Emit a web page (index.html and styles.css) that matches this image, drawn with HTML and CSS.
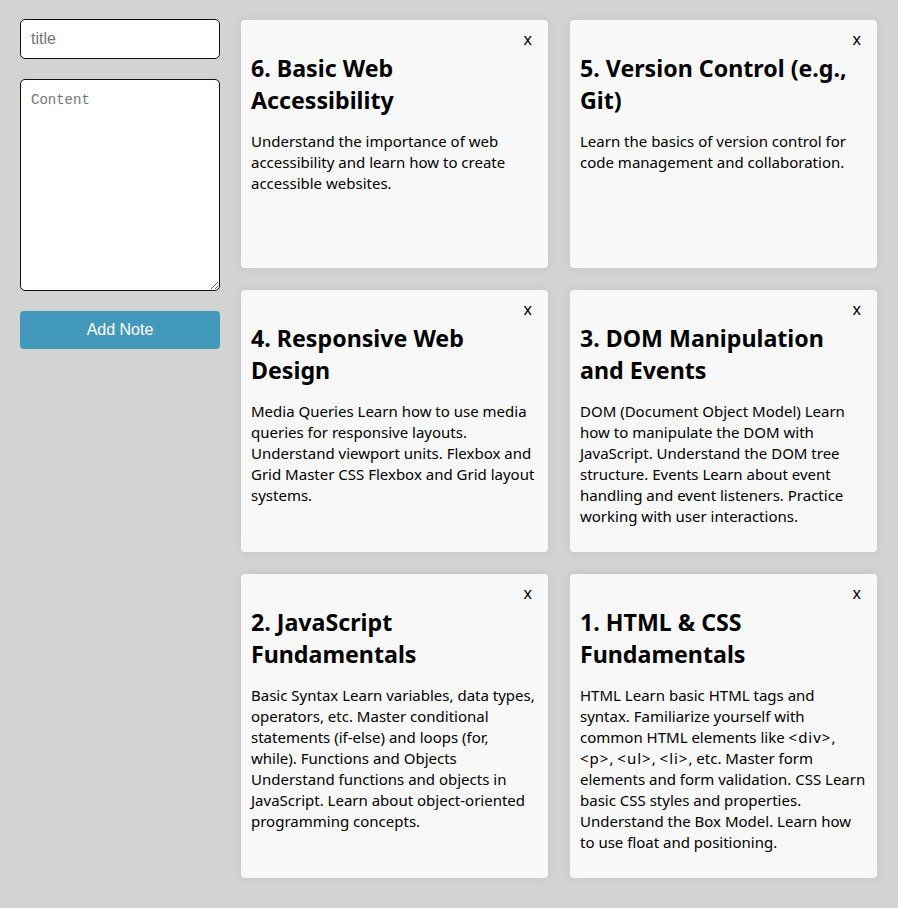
FILE: index.html
```html
<!DOCTYPE html>
<html>
<head>
<meta charset="utf-8">
<link rel="stylesheet" href="styles.css">
</head>
<body>
<div class="app">
  <form class="editor">
    <input class="title-input" type="text" placeholder="title">
    <textarea class="content-input" placeholder="Content"></textarea>
    <button class="add-btn" type="button">Add Note</button>
  </form>
  <div class="notes">
    <div class="note">
      <div class="note-head"><button class="close">x</button></div>
      <h2>6. Basic Web Accessibility</h2>
      <p>Understand the importance of web accessibility and learn how to create accessible websites.</p>
    </div>
    <div class="note">
      <div class="note-head"><button class="close">x</button></div>
      <h2>5. Version Control (e.g., Git)</h2>
      <p>Learn the basics of version control for code management and collaboration.</p>
    </div>
    <div class="note">
      <div class="note-head"><button class="close">x</button></div>
      <h2>4. Responsive Web Design</h2>
      <p>Media Queries Learn how to use media queries for responsive layouts. Understand viewport units. Flexbox and Grid Master CSS Flexbox and Grid layout systems.</p>
    </div>
    <div class="note">
      <div class="note-head"><button class="close">x</button></div>
      <h2>3. DOM Manipulation and Events</h2>
      <p>DOM (Document Object Model) Learn how to manipulate the DOM with JavaScript. Understand the DOM tree structure. Events Learn about event handling and event listeners. Practice working with user interactions.</p>
    </div>
    <div class="note">
      <div class="note-head"><button class="close">x</button></div>
      <h2>2. JavaScript Fundamentals</h2>
      <p>Basic Syntax Learn variables, data types, operators, etc. Master conditional statements (if-else) and loops (for, while). Functions and Objects Understand functions and objects in JavaScript. Learn about object-oriented programming concepts.</p>
    </div>
    <div class="note">
      <div class="note-head"><button class="close">x</button></div>
      <h2>1. HTML &amp; CSS Fundamentals</h2>
      <p>HTML Learn basic HTML tags and syntax. Familiarize yourself with common HTML elements like <span class="tag">&lt;div&gt;</span>, <span class="tag">&lt;p&gt;</span>, <span class="tag">&lt;ul&gt;</span>, <span class="tag">&lt;li&gt;</span>, etc. Master form elements and form validation. CSS Learn basic CSS styles and properties. Understand the Box Model. Learn how to use float and positioning.</p>
    </div>
  </div>
</div>
</body>
</html>
```

FILE: styles.css
```css
html, body {
  margin: 0;
  padding: 0;
  background: #d3d3d3;
}
body {
  font-family: "Noto Sans", "Open Sans", sans-serif;
}
.app {
  display: flex;
  align-items: flex-start;
  gap: 21px;
  padding: 19px 20px 30px 20px;
}
.editor {
  width: 200px;
  display: flex;
  flex-direction: column;
  margin: 0;
}
.title-input {
  box-sizing: border-box;
  width: 200px;
  height: 40px;
  border: 1px solid #111;
  border-radius: 5px;
  padding: 0 10px;
  font-family: "Liberation Sans", Arial, sans-serif;
  font-size: 16px;
  background: #fff;
}
.title-input::placeholder { color: #757575; }
.content-input {
  box-sizing: border-box;
  width: 200px;
  height: 212px;
  margin-top: 20px;
  border: 1px solid #111;
  border-radius: 5px;
  padding: 12px 10px 10px 10px;
  font-family: "Liberation Mono", "DejaVu Sans Mono", monospace;
  font-size: 14px;
  background: #fff;
  resize: vertical;
}
.content-input::placeholder { color: #757575; }
.add-btn {
  margin-top: 20px;
  height: 38px;
  width: 200px;
  border: none;
  border-radius: 4px;
  background: #4399b9;
  color: #fff;
  font-family: "Liberation Sans", Arial, sans-serif;
  font-size: 16px;
}
.notes {
  display: grid;
  grid-template-columns: 307px 307px;
  gap: 22px;
  margin-top: 1px;
}
.note {
  box-sizing: border-box;
  min-height: 248px;
  background: #f8f8f8;
  border-radius: 4px;
  padding: 10px 10px 10px 10px;
  box-shadow: 0 0 10px rgba(0, 0, 0, 0.08);
}
.note-head {
  display: flex;
  justify-content: flex-end;
  align-items: flex-start;
  height: 22px;
}
.close {
  background: none;
  border: none;
  padding: 0 6px;
  margin-top: -2px;
  font-family: "Noto Sans", sans-serif;
  font-size: 16px;
  line-height: 22px;
  color: #000;
}
.note h2 {
  margin: 0;
  font-size: 23.2px;
  line-height: 32px;
  font-weight: 700;
  color: #000;
}
.note p {
  margin: 15px 0 15px 0;
  font-size: 15px;
  line-height: 21px;
  color: #000;
}
.tag {
  letter-spacing: 1px;
}
```
